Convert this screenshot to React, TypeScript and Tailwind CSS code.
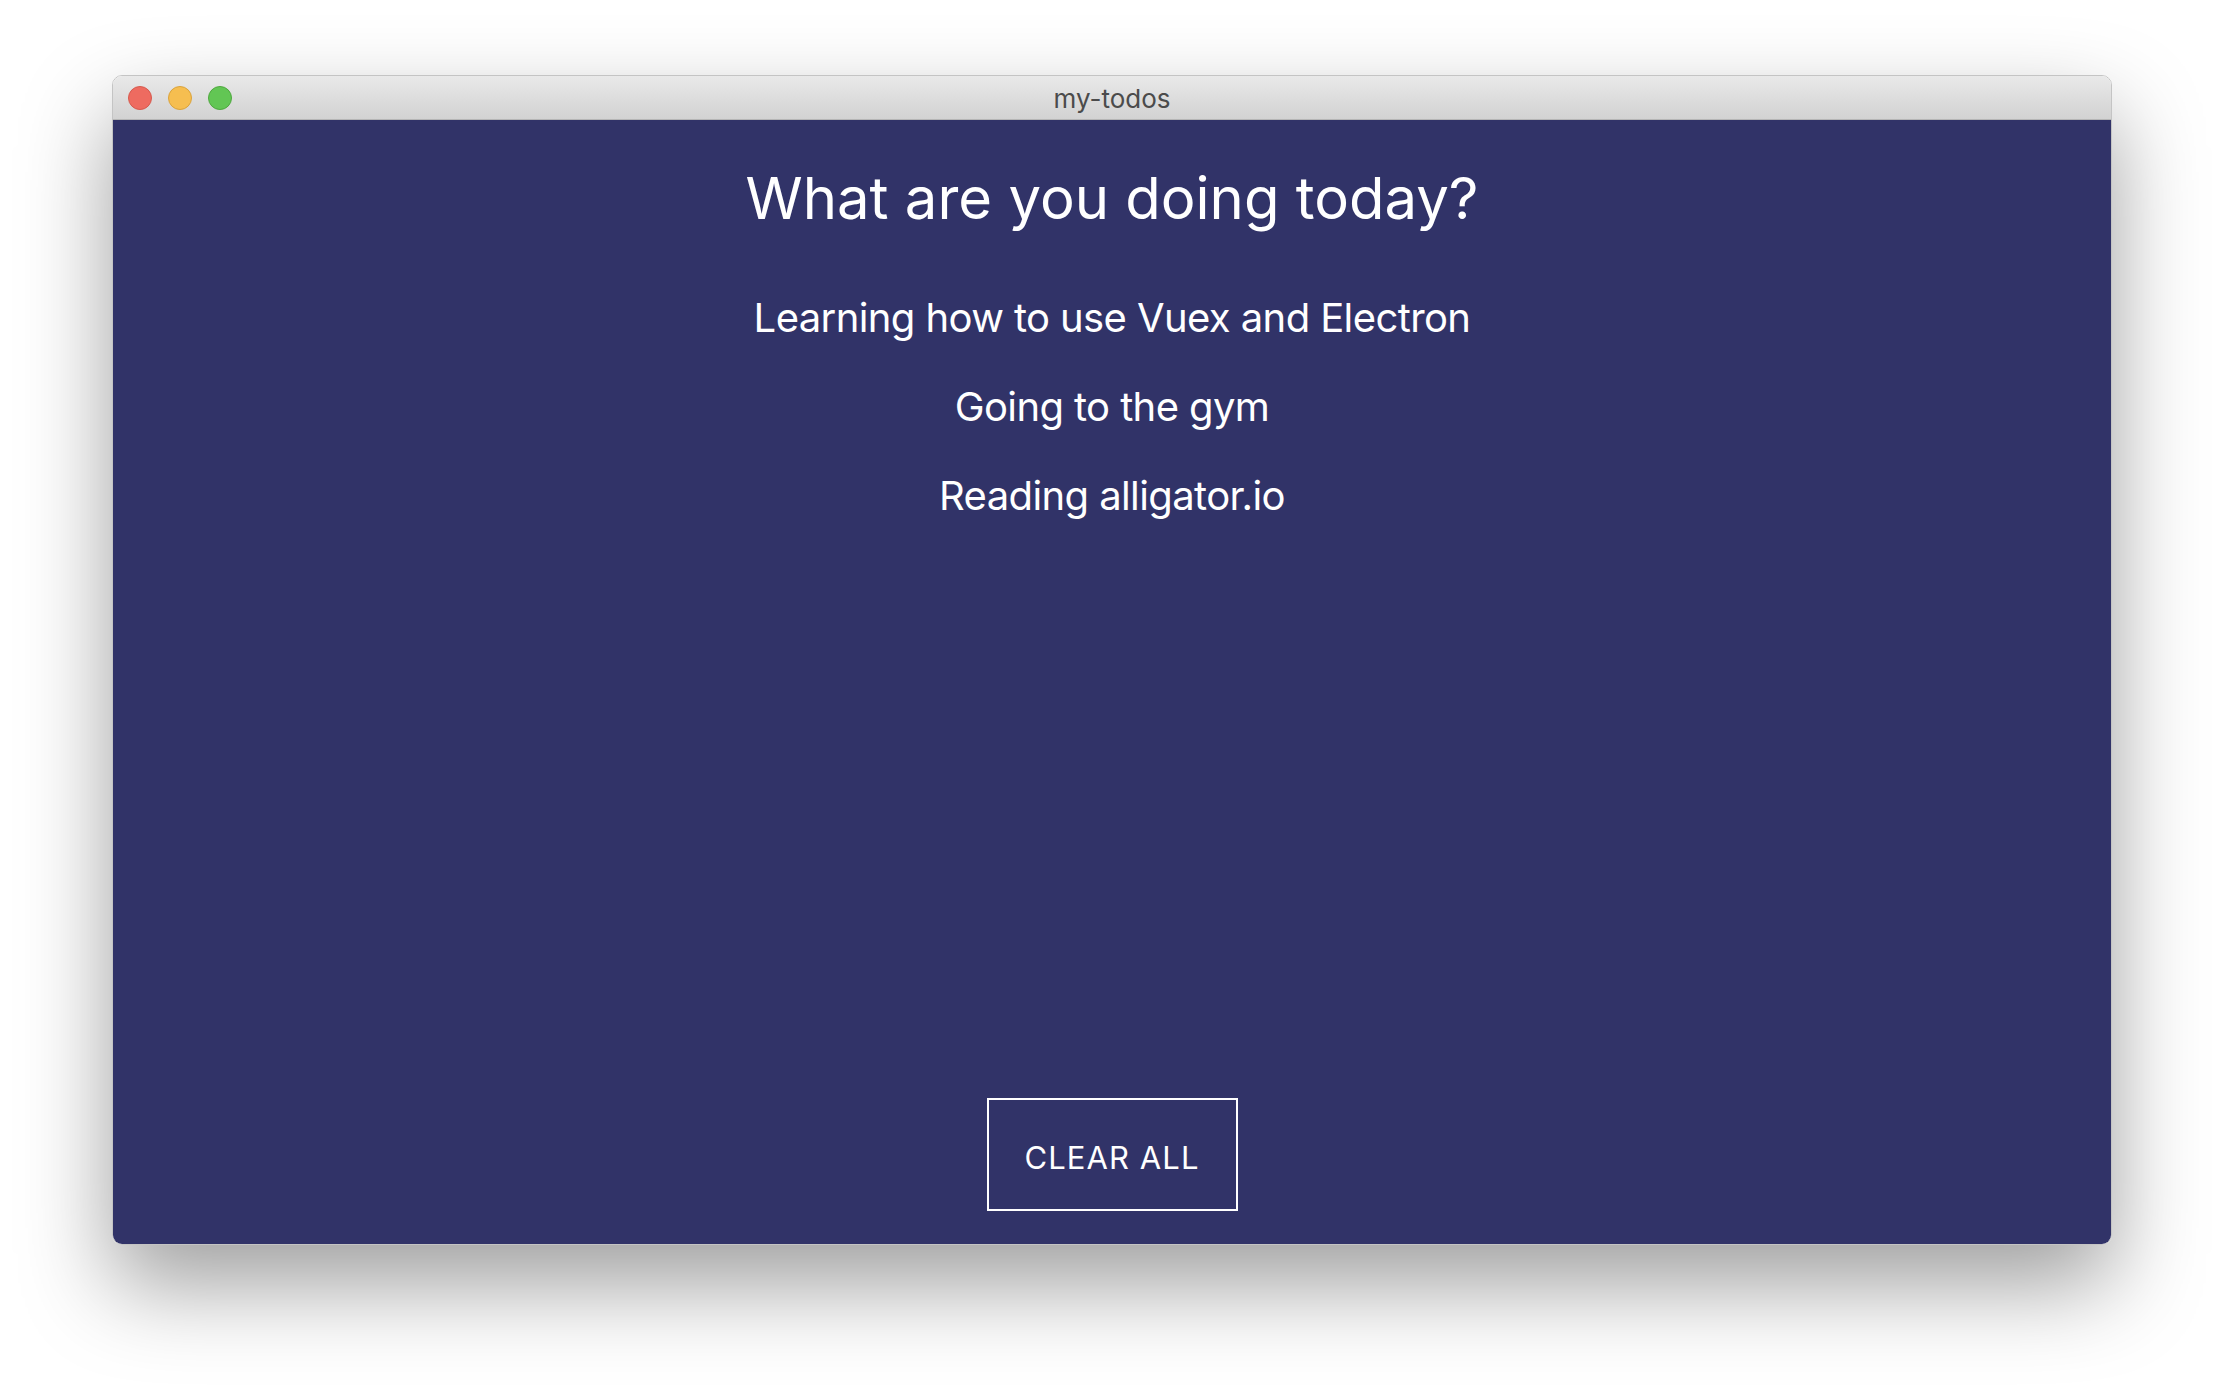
export default function App() {
  const todos = ["Learning how to use Vuex and Electron", "Going to the gym", "Reading alligator.io"];

  return (
    <div className="w-[2224px] h-[1394px] bg-white pt-[75px] pl-[112px]" style={{ fontFamily: "Inter, 'Noto Sans', sans-serif" }}>
      {/* window */}
      <div className="w-[2000px] h-[1170px] flex flex-col rounded-[10px] overflow-hidden border border-[#c4c4c4] shadow-[0_40px_90px_rgba(0,0,0,0.38)]">
        {/* title bar */}
        <div className="relative h-[44px] shrink-0 flex items-center bg-gradient-to-b from-[#e9e9e9] to-[#d2d2d2] border-b border-[#b5b5b5]">
          <div className="flex items-center gap-[16px] pl-[15px]">
            <span className="w-[24px] h-[24px] rounded-full bg-[#ee6b60] border border-[#d65a4e]" />
            <span className="w-[24px] h-[24px] rounded-full bg-[#f6be50] border border-[#daa33c]" />
            <span className="w-[24px] h-[24px] rounded-full bg-[#62c654] border border-[#4fa83f]" />
          </div>
          <div className="absolute inset-0 flex items-center justify-center pt-[2px] text-[26px] text-[#4b4b4b]">my-todos</div>
        </div>

        {/* content */}
        <div className="flex-1 flex flex-col items-center bg-[#313368] text-white">
          <h1 className="mt-[49px] text-[58px] leading-[58px] font-normal tracking-[0px]">What are you doing today?</h1>
          <ul className="mt-[46px] flex flex-col items-center">
            {todos.map((t) => (
              <li key={t} className="text-[40px] leading-[89px] tracking-[-0.6px]">
                {t}
              </li>
            ))}
          </ul>
          <button className="mt-auto mb-[33px] w-[251px] h-[113px] pt-[7px] border-2 border-white text-[31px] tracking-[1.1px] text-white">
            CLEAR ALL
          </button>
        </div>
      </div>
    </div>
  );
}
